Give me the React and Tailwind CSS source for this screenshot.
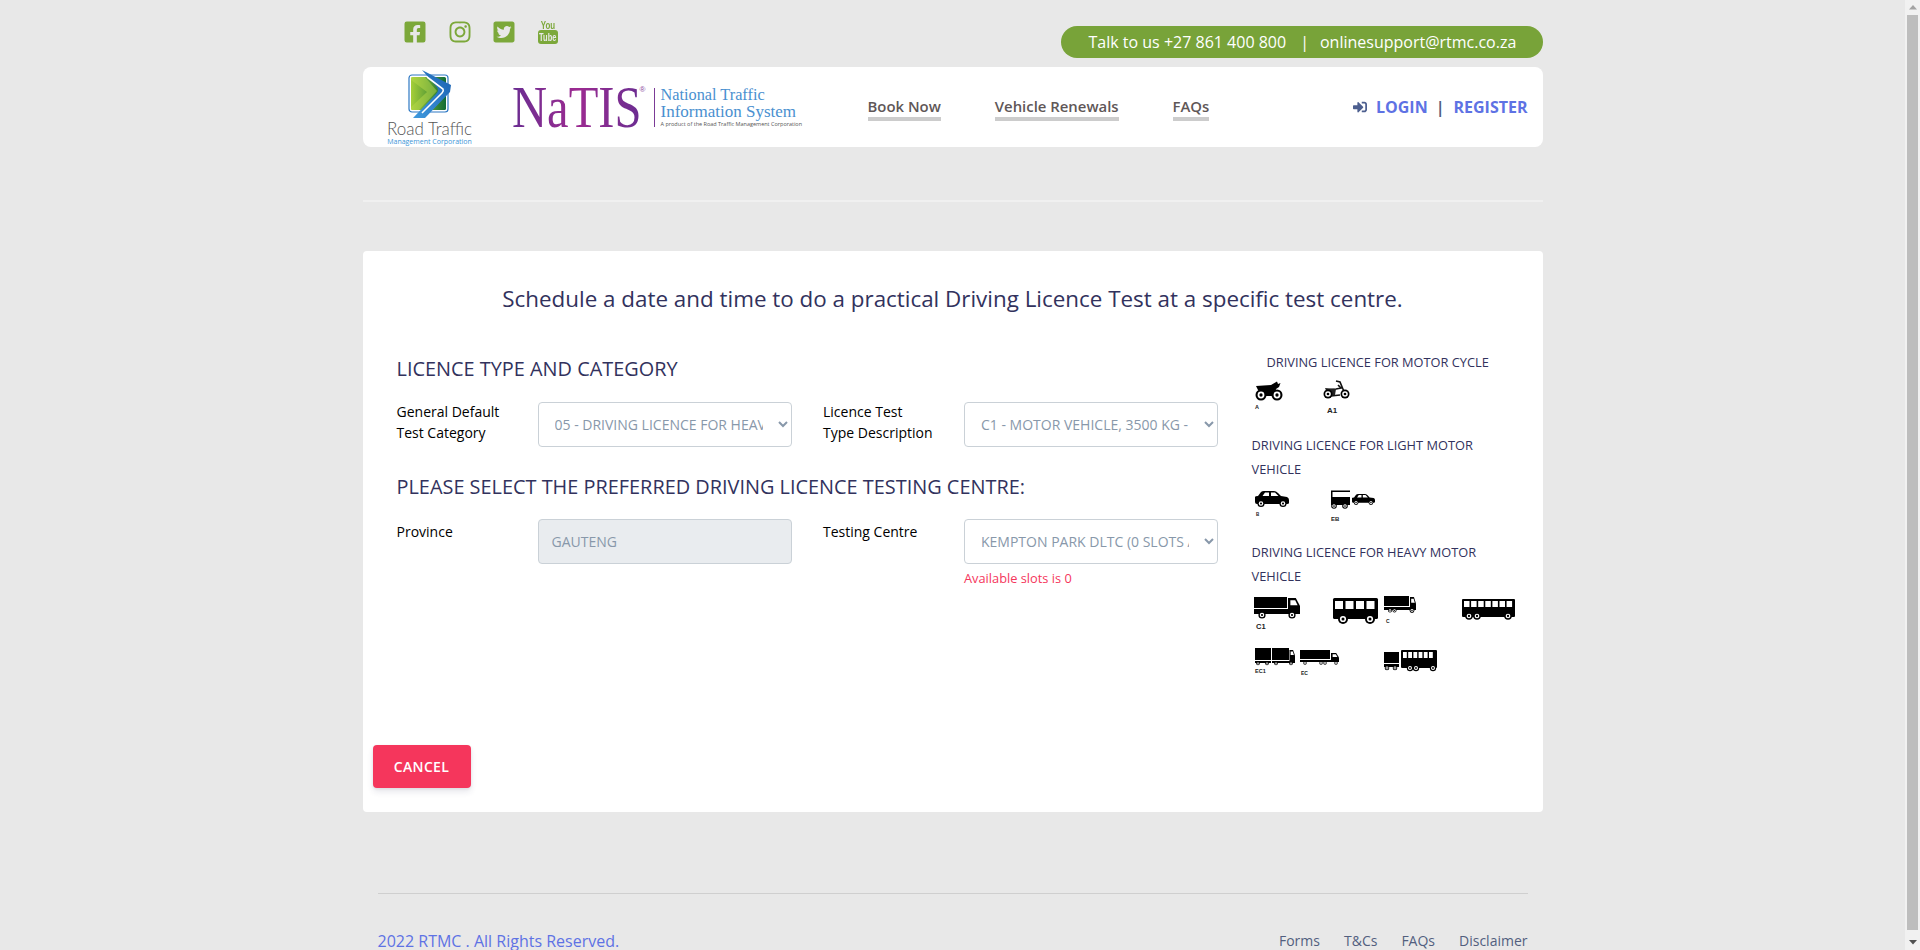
import { FaFacebookSquare, FaInstagram, FaTwitterSquare, FaSignInAlt } from "react-icons/fa";

const Wheel = ({ x, y, r }) => (
  <g>
    <circle cx={x} cy={y} r={r} fill="#000" />
    <circle cx={x} cy={y} r={r * 0.62} fill="#fff" />
    <circle cx={x} cy={y} r={r * 0.3} fill="#000" />
  </g>
);

const Label = ({ x, y, size = 6, children }) => (
  <text x={x} y={y} fontSize={size} fontWeight="700" fontFamily="'Liberation Sans', sans-serif" fill="#222">
    {children}
  </text>
);

// row of white bus windows
const Windows = ({ x, y, w, h, n, gap = 1.5 }) => (
  <g>
    {Array.from({ length: n }).map((_, i) => (
      <rect key={i} x={x + i * (w + gap)} y={y} width={w} height={h} fill="#fff" />
    ))}
  </g>
);

const Car = ({ x, y, w = 34 }) => {
  const s = w / 34;
  return (
    <g transform={`translate(${x} ${y}) scale(${s})`}>
      <path d="M0 6 Q0 5 3 5 L6 1 Q7 0 9 0 L19 0 Q21 0 23 2 L26 5 L32 6 Q34 7 34 9 L34 12 Q34 13 32 13 L2 13 Q0 13 0 11 Z" fill="#000" />
      <path d="M7.5 5 L10 1.5 L14 1.5 L14 5 Z M16 1.5 L20 1.5 L23.5 5 L16 5 Z" fill="#fff" />
      <Wheel x={6} y={12.5} r={3.6} />
      <Wheel x={28} y={12.5} r={3.6} />
    </g>
  );
};

const Cab = ({ x, y, w, h }) => (
  <g>
    <path d={`M${x} ${y} L${x + w * 0.65} ${y} L${x + w} ${y + h * 0.5} L${x + w} ${y + h} L${x} ${y + h} Z`} fill="#000" />
    <path d={`M${x + w * 0.2} ${y + h * 0.14} L${x + w * 0.6} ${y + h * 0.14} L${x + w * 0.8} ${y + h * 0.45} L${x + w * 0.2} ${y + h * 0.45} Z`} fill="#fff" />
  </g>
);

function MotorCycles() {
  return (
    <svg width="130" height="40" viewBox="1250 378 130 40" className="block ml-[-2px]">
      <path d="M1256 386 L1271 385 L1277 381.5 L1278 384 L1280.5 383 L1279 387 L1276 389 L1275 396 L1263 396 L1258 390 Z" fill="#000" />
      <Wheel x={1261} y={395} r={5.5} />
      <Wheel x={1277} y={395} r={5.5} />
      <Label x={1255} y={409} size={5.5}>A</Label>
      <path d="M1326 390 L1336 389 L1341 388 L1338 385 M1336 381 L1340 382 L1345 394 M1331 396 L1340 395" stroke="#111" strokeWidth="1.6" fill="none" />
      <path d="M1325 388 L1336 389 L1335 395 L1328 395 Z" fill="#222" />
      <Wheel x={1328} y={394} r={4.5} />
      <Wheel x={1345} y={394} r={4.5} />
      <Label x={1327} y={413} size={8}>A1</Label>
    </svg>
  );
}

function LightVehicles() {
  return (
    <svg width="130" height="36" viewBox="1250 489 130 36" className="block ml-[-2px]">
      <Car x={1255} y={491} />
      <Label x={1256} y={516} size={4.5}>B</Label>
      <path d="M1331 490.5 L1350 490.5 L1350 492 L1332.5 492 L1332.5 497 L1350 497 L1350 505 L1331 505 Z" fill="#000" />
      <Wheel x={1334} y={506} r={2.8} />
      <Wheel x={1345} y={506} r={2.8} />
      <Car x={1352} y={494} w={23} />
      <Label x={1331} y={521} size={6}>EB</Label>
    </svg>
  );
}

function HeavyVehicles() {
  return (
    <svg width="270" height="86" viewBox="1250 594 270 86" className="block ml-[-2px]">
      {/* C1 */}
      <rect x={1254} y={597} width={33} height={11} fill="#000" />
      <rect x={1254} y={609} width={34} height={5} fill="#000" />
      <Cab x={1288} y={598} w={12} h={16} />
      <Wheel x={1262} y={615} r={3.6} />
      <Wheel x={1292} y={615} r={3.6} />
      <Label x={1256} y={629} size={7.5}>C1</Label>

      {/* bus */}
      <rect x={1333} y={598} width={45} height={21} rx={1.5} fill="#000" />
      <Windows x={1335} y={601} w={8} h={8} n={4} gap={2.5} />
      <rect x={1335} y={611} width={43} height={2} fill="#000" />
      <Wheel x={1343} y={619} r={5} />
      <Wheel x={1370} y={619} r={5} />

      {/* C */}
      <rect x={1384} y={596} width={25} height={10} fill="#000" />
      <rect x={1384} y={607} width={32} height={3} fill="#000" />
      <Cab x={1410} y={597} w={6} h={13} />
      <Wheel x={1390} y={610.5} r={2} />
      <Wheel x={1394.5} y={610.5} r={2} />
      <Wheel x={1412} y={610.5} r={2.4} />
      <Label x={1386} y={623} size={5}>C</Label>

      {/* long bus */}
      <rect x={1462} y={599} width={53} height={18} rx={1} fill="#000" />
      <Windows x={1464} y={601} w={5.5} h={6} n={7} gap={1.6} />
      <Wheel x={1469} y={616} r={3.8} />
      <Wheel x={1477} y={616} r={3.8} />
      <Wheel x={1508} y={616} r={3.8} />

      {/* EC1 */}
      <rect x={1255} y={648} width={16} height={12} fill="#000" />
      <rect x={1255} y={661} width={16} height={2} fill="#000" />
      <rect x={1272} y={648} width={17} height={12} fill="#000" />
      <rect x={1272} y={661} width={23} height={2} fill="#000" />
      <Cab x={1289.5} y={650} w={5.5} h={11} />
      <Wheel x={1258} y={663.5} r={1.8} />
      <Wheel x={1267} y={663.5} r={1.8} />
      <Wheel x={1276} y={663.5} r={1.8} />
      <Wheel x={1291} y={663.5} r={1.8} />
      <Label x={1255} y={673} size={5.5}>EC1</Label>

      {/* EC */}
      <rect x={1300} y={650} width={30} height={9} fill="#000" />
      <rect x={1300} y={660} width={39} height={2} fill="#000" />
      <Cab x={1331} y={653} w={8} h={9} />
      <Wheel x={1305} y={663} r={1.7} />
      <Wheel x={1321} y={663} r={1.7} />
      <Wheel x={1325} y={663} r={1.7} />
      <Wheel x={1336} y={663} r={1.7} />
      <Label x={1301} y={675} size={5}>EC</Label>

      {/* bus + trailer */}
      <rect x={1384} y={652} width={15} height={11} fill="#000" />
      <rect x={1384} y={664} width={15} height={3} fill="#000" />
      <Wheel x={1387} y={668} r={2.3} />
      <Wheel x={1395} y={668} r={2.3} />
      <rect x={1401} y={650} width={36} height={18} rx={1} fill="#000" />
      <Windows x={1403} y={652} w={3.8} h={6} n={6} gap={1.4} />
      <Wheel x={1410} y={668} r={3.2} />
      <Wheel x={1416} y={668} r={3.2} />
      <Wheel x={1433} y={668} r={3.2} />
    </svg>
  );
}

function RtmcLogo() {
  return (
    <div className="w-[84px] flex flex-col items-center">
      <svg width="46" height="50" viewBox="0 0 46 50" className="block">
        <defs>
          <linearGradient id="sq" x1="0" y1="0" x2="1" y2="0">
            <stop offset="0" stopColor="#a6cf38" />
            <stop offset="1" stopColor="#0f6b35" />
          </linearGradient>
          <linearGradient id="road" x1="0" y1="1" x2="1" y2="0">
            <stop offset="0" stopColor="#3f9ade" />
            <stop offset="1" stopColor="#1a5fb0" />
          </linearGradient>
        </defs>
        <rect x="2" y="6" width="39" height="37" rx="3" fill="#fff" stroke="#2f79c4" strokeWidth="1.2" />
        <rect x="4" y="8" width="35" height="33" rx="1.5" fill="url(#sq)" />
        <path d="M4 8 L18 8 L30 22 L12 41 L4 41 L4 38 L20 23 L4 11 Z" fill="#b9d94a" opacity="0.5" />
        <path d="M15 1 L44 16 L43 23 L18 49 L6 49 L29 25 Q33 21 29 17 Z" fill="url(#road)" />
        <path d="M20 8 L36 20 Q37 22 35 24 L15 44" fill="none" stroke="#fff" strokeWidth="1.6" />
      </svg>
      <div className="font-['Lato',sans-serif] font-light text-[17px] leading-[17px] text-[#555] whitespace-nowrap mt-[1px]">Road Traffic</div>
      <div className="text-[7px] leading-[9px] text-[#3c96d8] whitespace-nowrap">Management Corporation</div>
    </div>
  );
}

function NatisLogo() {
  return (
    <div className="flex items-center ml-[40px]">
      <div className="relative w-[142px] h-[48px]">
        <span className="inline-block origin-left scale-x-[0.81] font-['Liberation_Serif',serif] text-[60px] leading-[48px] bg-linear-to-r from-[#6a2c91] via-[#9c2a91] to-[#6a2c91] bg-clip-text text-transparent whitespace-nowrap">NaTIS</span>
        <span className="absolute left-[128px] top-[2px] font-['Liberation_Sans',sans-serif] text-[8px] leading-[10px] text-[#8a4a9c]">®</span>
      </div>
      <div className="w-px h-[39px] bg-[#7b3a96]" />
      <div className="ml-[6px] w-[135px] font-['Liberation_Serif',serif] text-[#4a90d0] whitespace-nowrap">
        <div className="text-[16.3px] leading-[17px]">National Traffic</div>
        <div className="text-[17px] leading-[17px]">Information System</div>
        <div className="font-['Open_Sans',sans-serif] text-[5.5px] leading-[8px] text-[#555]">A product of the Road Traffic Management Corporation</div>
      </div>
    </div>
  );
}

function NavLink({ children }) {
  return (
    <a className="text-[14.9px] leading-[20px] font-semibold text-[#5f5757] border-b-4 border-[#cccccc] pb-[1px]">{children}</a>
  );
}

function Field({ label, labelClass = "", children }) {
  return (
    <div className="flex w-[395px]">
      <div className={`w-[141px] shrink-0 text-[14px] leading-[21px] text-black ${labelClass}`}>{label}</div>
      <div className="w-[254px]">{children}</div>
    </div>
  );
}

function Select({ value }) {
  return (
    <select
      defaultValue={value}
      className="w-full h-[45px] px-[12px] bg-white border border-[#cad1d7] rounded-[4px] text-[14px] text-[#8898aa] uppercase"
    >
      <option>{value}</option>
    </select>
  );
}

function YoutubeIcon() {
  return (
    <div className="w-[20px] h-[24px] ml-[1px] flex flex-col items-center font-['Liberation_Sans',sans-serif] font-bold text-[11px]">
      <span className="inline-block scale-x-[0.72] leading-[10px] text-[#7ca83a]">You</span>
      <span className="w-[20px] h-[14px] rounded-[3px] bg-[#7ca83a] flex justify-center overflow-visible">
        <span className="inline-block scale-x-[0.68] leading-[14px] text-[#e8e8e8]">Tube</span>
      </span>
    </div>
  );
}

function Scrollbar() {
  return (
    <div className="w-[15px] shrink-0 h-full bg-[#f1f1f1] flex flex-col items-center">
      <svg width="8" height="15" viewBox="0 0 8 15" className="block shrink-0">
        <path d="M4 5 L8 9.5 L0 9.5 Z" fill="#a3a3a3" />
      </svg>
      <div className="w-[11px] h-[915px] bg-[#bdbdbd]" />
      <svg width="8" height="20" viewBox="0 0 8 20" className="block shrink-0">
        <path d="M0 10 L8 10 L4 14.5 Z" fill="#505050" />
      </svg>
    </div>
  );
}

export default function App() {
  return (
    <div className="h-screen overflow-hidden flex bg-[#e8e8e8] font-['Open_Sans',sans-serif]">
      <div className="flex-1 min-w-0">
        <div className="w-[1180px] mx-auto">
          {/* top strip */}
          <div className="h-[67px] flex items-start justify-between">
            <div className="flex items-center gap-[21px] ml-[40px] pt-[20px] text-[#7ca83a]">
              <FaFacebookSquare size={24} />
              <FaInstagram size={24} />
              <FaTwitterSquare size={24} className="ml-[-1px]" />
              <YoutubeIcon />
            </div>
            <div className="mt-[26px] h-[32px] w-[482px] rounded-full bg-[#78a339] text-white text-[16px] leading-[32px] pl-[28px] whitespace-nowrap">
              Talk to us +27 861 400 800
              <span className="ml-[14px] mr-[11px]">|</span>
              onlinesupport@rtmc.co.za
            </div>
          </div>

          {/* header */}
          <div className="h-[80px] bg-white rounded-lg flex items-center pl-[25px] pr-[15px]">
            <RtmcLogo />
            <NatisLogo />
            <div className="flex gap-[54px] ml-[72px] pt-[2px]">
              <NavLink>Book Now</NavLink>
              <NavLink>Vehicle Renewals</NavLink>
              <NavLink>FAQs</NavLink>
            </div>
            <div className="ml-auto flex items-center text-[16px] font-bold text-[#5e72e4] leading-[24px]">
              <FaSignInAlt size={14} className="text-[#4d5f8f] mr-[9px]" />
              <span>LOGIN</span>
              <span className="ml-[8px] mr-[9px] text-[#525f7f]">|</span>
              <span>REGISTER</span>
            </div>
          </div>

          <div className="mt-[53px] h-[2px] bg-[#f0f0f0]" />

          {/* main card */}
          <div className="mt-[49px] h-[561px] bg-white rounded-[4px] flex flex-col">
            <h1 className="mt-[32px] text-center text-[22.4px] leading-[32px] text-[#32325d]">
              Schedule a date and time to do a practical Driving Licence Test at a specific test centre.
            </h1>

            <div className="flex mt-[32px] ml-[34px]">
              <div className="w-[855px]">
                <h2 className="text-[19.9px] leading-[30px] text-[#32325d] mt-[7px]">LICENCE TYPE AND CATEGORY</h2>
                <div className="flex gap-[31.5px] mt-[18px]">
                  <Field label={<>General Default<br />Test Category</>} labelClass="mt-[-1px]">
                    <Select value="05 - DRIVING LICENCE FOR HEAVY MOTOR VEHICLE" />
                  </Field>
                  <Field label={<>Licence Test<br />Type Description</>} labelClass="mt-[-1px]">
                    <Select value="C1 - MOTOR VEHICLE, 3500 KG - 16000 KG" />
                  </Field>
                </div>
                <h2 className="text-[19.9px] leading-[30px] text-[#32325d] mt-[25px]">PLEASE SELECT THE PREFERRED DRIVING LICENCE TESTING CENTRE:</h2>
                <div className="flex gap-[31.5px] mt-[17px]">
                  <Field label="Province" labelClass="pt-[2px]">
                    <div className="h-[45px] px-[13px] bg-[#e9ecef] border border-[#cad1d7] rounded-[4px] text-[14px] leading-[43px] text-[#8898aa]">GAUTENG</div>
                  </Field>
                  <Field label="Testing Centre" labelClass="pt-[2px]">
                    <Select value="KEMPTON PARK DLTC (0 SLOTS AVAILABLE)" />
                    <div className="text-[12.8px] leading-[20px] text-[#f5365c] mt-[4px]">Available slots is 0</div>
                  </Field>
                </div>
              </div>

              <div className="w-[270px] text-[12.8px] text-[#32325d] leading-[24px] pt-[3px]">
                <div className="ml-[15px]">DRIVING LICENCE FOR MOTOR CYCLE</div>
                <div className="mt-[4px]"><MotorCycles /></div>
                <div className="mt-[15px]">DRIVING LICENCE FOR LIGHT MOTOR<br />VEHICLE</div>
                <div className="mt-[8px]"><LightVehicles /></div>
                <div className="mt-[15px]">DRIVING LICENCE FOR HEAVY MOTOR<br />VEHICLE</div>
                <div className="mt-[6px]"><HeavyVehicles /></div>
              </div>
            </div>

            <button className="mt-auto mb-[24px] ml-[10px] w-[98px] h-[43px] rounded-[4px] bg-[#f5365c] text-white text-[14px] tracking-[0.35px] font-semibold shadow-[0_4px_6px_rgba(50,50,93,0.11),0_1px_3px_rgba(0,0,0,0.08)]">
              CANCEL
            </button>
          </div>

          {/* footer */}
          <div className="mx-[15px] mt-[81px] border-t border-[#cfcfcf] pt-[38px] flex justify-between items-center">
            <div className="text-[16px] leading-[18px] text-[#5e72e4]">2022 RTMC . All Rights Reserved.</div>
            <div className="flex gap-[24px] text-[14px] leading-[18px] text-[#525f7f]">
              <a>Forms</a>
              <a>T&amp;Cs</a>
              <a>FAQs</a>
              <a>Disclaimer</a>
            </div>
          </div>
        </div>
      </div>
      <Scrollbar />
    </div>
  );
}
